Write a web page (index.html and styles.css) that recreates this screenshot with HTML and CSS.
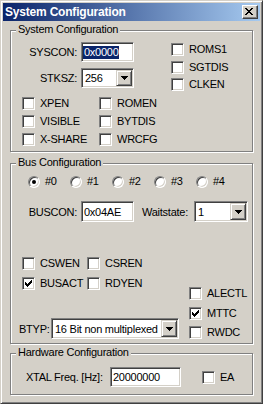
FILE: index.html
```html
<!DOCTYPE html>
<html lang="en">
<head>
  <meta charset="UTF-8">
  <title>System Configuration</title>
  <link rel="stylesheet" href="styles.css">
</head>
<body>
  <div class="window">
    <div class="titlebar">
      <span class="title">System Configuration</span>
      <button class="close-btn">
        <svg width="8" height="7" viewBox="0 0 8 7" shape-rendering="crispEdges"><path d="M0 0h2v1H0zM6 0h2v1H6zM1 1h2v1H1zM5 1h2v1H5zM2 2h4v1H2zM3 3h2v1H3zM2 4h4v1H2zM1 5h2v1H1zM5 5h2v1H5zM0 6h2v1H0zM6 6h2v1H6z"/></svg>
      </button>
    </div>

    <!-- System Configuration -->
    <div class="group group-sys">
      <span class="group-title">System Configuration</span>
      <div class="sys-top">
        <div class="fields">
          <div class="field">
            <span class="field-label">SYSCON:</span>
            <div class="edit w53"><span class="sel">0x0000</span></div>
          </div>
          <div class="field">
            <span class="field-label">STKSZ:</span>
            <div class="combo w53">
              <span class="combo-text">256</span>
              <span class="drop-btn"><svg width="7" height="4" viewBox="0 0 7 4" shape-rendering="crispEdges"><path d="M0 0h7v1H0zM1 1h5v1H1zM2 2h3v1H2zM3 3h1v1H3z"/></svg></span>
            </div>
          </div>
        </div>
        <div class="check-col sys-checks">
          <label class="check"><span class="check-box"></span>ROMS1</label>
          <label class="check"><span class="check-box"></span>SGTDIS</label>
          <label class="check"><span class="check-box"></span>CLKEN</label>
        </div>
      </div>
      <div class="check-grid sys-grid">
        <label class="check"><span class="check-box"></span>XPEN</label>
        <label class="check"><span class="check-box"></span>ROMEN</label>
        <label class="check"><span class="check-box"></span>VISIBLE</label>
        <label class="check"><span class="check-box"></span>BYTDIS</label>
        <label class="check"><span class="check-box"></span>X-SHARE</label>
        <label class="check"><span class="check-box"></span>WRCFG</label>
      </div>
    </div>

    <!-- Bus Configuration -->
    <div class="group group-bus">
      <span class="group-title">Bus Configuration</span>
      <div class="radio-row">
        <label class="radio-item"><span class="radio on"></span>#0</label>
        <label class="radio-item"><span class="radio"></span>#1</label>
        <label class="radio-item"><span class="radio"></span>#2</label>
        <label class="radio-item"><span class="radio"></span>#3</label>
        <label class="radio-item"><span class="radio"></span>#4</label>
      </div>
      <div class="bus-row">
        <span class="field-label">BUSCON:</span>
        <div class="edit w53"><span class="edit-text">0x04AE</span></div>
        <span class="wait-label">Waitstate:</span>
        <div class="combo w54">
          <span class="combo-text">1</span>
          <span class="drop-btn"><svg width="7" height="4" viewBox="0 0 7 4" shape-rendering="crispEdges"><path d="M0 0h7v1H0zM1 1h5v1H1zM2 2h3v1H2zM3 3h1v1H3z"/></svg></span>
        </div>
      </div>
      <div class="bus-bottom">
        <div class="bus-left">
          <div class="check-grid bus-grid">
            <label class="check"><span class="check-box"></span>CSWEN</label>
            <label class="check"><span class="check-box"></span>CSREN</label>
            <label class="check"><span class="check-box"><svg width="7" height="7" viewBox="0 0 7 7" shape-rendering="crispEdges"><path d="M0 2h1v3H0zM1 3h1v3H1zM2 4h1v3H2zM3 3h1v3H3zM4 2h1v3H4zM5 1h1v3H5zM6 0h1v3H6z"/></svg></span>BUSACT</label>
            <label class="check"><span class="check-box"></span>RDYEN</label>
          </div>
          <div class="btyp-row">
            <span class="btyp-label">BTYP:</span>
            <div class="combo w128">
              <span class="combo-text">16 Bit non multiplexed</span>
              <span class="drop-btn"><svg width="7" height="4" viewBox="0 0 7 4" shape-rendering="crispEdges"><path d="M0 0h7v1H0zM1 1h5v1H1zM2 2h3v1H2zM3 3h1v1H3z"/></svg></span>
            </div>
          </div>
        </div>
        <div class="check-col bus-checks">
          <label class="check"><span class="check-box"></span>ALECTL</label>
          <label class="check"><span class="check-box"><svg width="7" height="7" viewBox="0 0 7 7" shape-rendering="crispEdges"><path d="M0 2h1v3H0zM1 3h1v3H1zM2 4h1v3H2zM3 3h1v3H3zM4 2h1v3H4zM5 1h1v3H5zM6 0h1v3H6z"/></svg></span>MTTC</label>
          <label class="check"><span class="check-box"></span>RWDC</label>
        </div>
      </div>
    </div>

    <!-- Hardware Configuration -->
    <div class="group group-hw">
      <span class="group-title">Hardware Configuration</span>
      <div class="xtal-row">
        <span class="xtal-label">XTAL Freq. [Hz]:</span>
        <div class="edit w71"><span class="edit-text">20000000</span></div>
        <label class="check ea"><span class="check-box"></span>EA</label>
      </div>
    </div>
  </div>
</body>
</html>
```

FILE: styles.css
```css
* {
  box-sizing: border-box;
}

body {
  margin: 0;
  font-family: "Liberation Sans", Arial, sans-serif;
  font-size: 11px;
  letter-spacing: -0.25px;
  color: #000;
  background: #d4d0c8;
}

.window {
  width: 263px;
  height: 404px;
  padding: 2px;
  background: #d4d0c8;
  border: 1px solid;
  border-color: #d4d0c8 #404040 #404040 #d4d0c8;
  box-shadow: inset 1px 1px 0 #fff, inset -1px -1px 0 #808080;
}

/* title bar */
.titlebar {
  display: flex;
  align-items: center;
  height: 18px;
  padding: 0 2px;
  background: linear-gradient(to right, #0a246a, #a6caf0);
  color: #fff;
}

.title {
  flex: 1;
  font-size: 12px;
  font-weight: bold;
  letter-spacing: -0.2px;
  white-space: nowrap;
}

.close-btn {
  width: 16px;
  height: 14px;
  padding: 2px 0 0 2px;
  background: #d4d0c8;
  border: 1px solid;
  border-color: #fff #404040 #404040 #fff;
  box-shadow: inset -1px -1px 0 #808080;
  display: flex;
  align-items: flex-start;
}

.close-btn svg {
  display: block;
}

/* group boxes */
.group {
  position: relative;
  width: 243px;
  margin-left: 7px;
  border: 1px solid #808080;
  box-shadow: 1px 1px 0 #fff, inset 1px 1px 0 #fff;
}

.group-title {
  position: absolute;
  top: -8px;
  left: 5px;
  padding: 0 2px;
  line-height: 13px;
  background: #d4d0c8;
  white-space: nowrap;
}

.group-sys {
  margin-top: 9px;
  height: 122px;
  padding-top: 11px;
}

.group-bus {
  margin-top: 11px;
  height: 181px;
  padding-top: 11px;
}

.group-hw {
  margin-top: 9px;
  height: 42px;
  padding-top: 13px;
}

/* edits and combos */
.edit, .combo {
  display: flex;
  align-items: center;
  height: 20px;
  background: #fff;
  border: 1px solid;
  border-color: #808080 #fff #fff #808080;
  box-shadow: inset 1px 1px 0 #404040, inset -1px -1px 0 #d4d0c8;
  white-space: nowrap;
  overflow: hidden;
}

.edit {
  padding: 0 2px;
}

.combo {
  padding: 0 1px 0 3px;
}

.w53 { width: 53px; }
.w54 { width: 54px; }
.w71 { width: 71px; }
.w128 { width: 128px; }

.sel {
  margin-left: -1px;
  padding-left: 1px;
  line-height: 13px;
  background: #0a246a;
  color: #fff;
}

.combo-text {
  flex: 1;
  overflow: hidden;
}

.drop-btn {
  display: flex;
  align-items: center;
  justify-content: center;
  width: 16px;
  align-self: stretch;
  margin: 1px 0;
  background: #d4d0c8;
  border: 1px solid;
  border-color: #d4d0c8 #404040 #404040 #d4d0c8;
  box-shadow: inset 1px 1px 0 #fff, inset -1px -1px 0 #808080;
}

.drop-btn svg {
  display: block;
}

/* system group */
.sys-top {
  display: flex;
  height: 49px;
}

.fields {
  display: flex;
  flex-direction: column;
  gap: 6px;
}

.field {
  display: flex;
  align-items: center;
}

.field-label {
  width: 66px;
  margin-right: 4px;
  text-align: right;
}

.check-col {
  display: flex;
  flex-direction: column;
}

.sys-checks {
  margin-left: 37px;
  margin-top: 1px;
  gap: 4.5px;
}

.check-grid {
  display: grid;
  padding-left: 11px;
}

.sys-grid {
  margin-top: 6px;
  grid-template-columns: 77px auto;
  row-gap: 5px;
}

/* check boxes and radios */
.check {
  display: flex;
  align-items: center;
  height: 13px;
  line-height: 13px;
  white-space: nowrap;
}

.check-box {
  display: flex;
  align-items: center;
  justify-content: center;
  flex-shrink: 0;
  width: 13px;
  height: 13px;
  margin-right: 5px;
  background: #fff;
  border: 1px solid;
  border-color: #808080 #fff #fff #808080;
  box-shadow: inset 1px 1px 0 #404040, inset -1px -1px 0 #d4d0c8;
}

.check-box svg {
  display: block;
}

.radio-row {
  display: flex;
  padding-left: 17px;
}

.radio-item {
  display: flex;
  align-items: center;
  width: 42px;
  height: 13px;
  line-height: 13px;
}

.radio {
  display: flex;
  align-items: center;
  justify-content: center;
  width: 12px;
  height: 12px;
  margin-right: 5px;
  border-radius: 50%;
  background: #fff;
  border: 1px solid;
  border-color: #808080 #fff #fff #808080;
  box-shadow: inset 1px 1px 0 #404040, inset -1px -1px 0 #d4d0c8;
}

.radio.on::after {
  content: "";
  width: 4px;
  height: 4px;
  border-radius: 50%;
  background: #000;
}

/* bus group */
.bus-row {
  display: flex;
  align-items: center;
  margin-top: 13px;
}

.bus-row .edit, .bus-row .combo {
  height: 21px;
}

.wait-label {
  width: 52px;
  margin-left: 8px;
}

.bus-bottom {
  display: flex;
  align-items: flex-end;
  margin-top: 35px;
}

.bus-left {
  width: 168px;
}

.bus-grid {
  grid-template-columns: 65px auto;
  row-gap: 7px;
}

.btyp-row {
  display: flex;
  align-items: center;
  margin-top: 28px;
  margin-left: 8px;
}

.btyp-row .combo {
  height: 21px;
}

.btyp-label {
  width: 32px;
}

.bus-checks {
  margin-left: 10px;
  gap: 6.5px;
}

/* hardware group */
.xtal-row {
  display: flex;
  align-items: center;
  padding-left: 15px;
}

.xtal-label {
  width: 81px;
  margin-right: 3px;
  white-space: nowrap;
}

.check.ea {
  margin-left: 21px;
}
```
